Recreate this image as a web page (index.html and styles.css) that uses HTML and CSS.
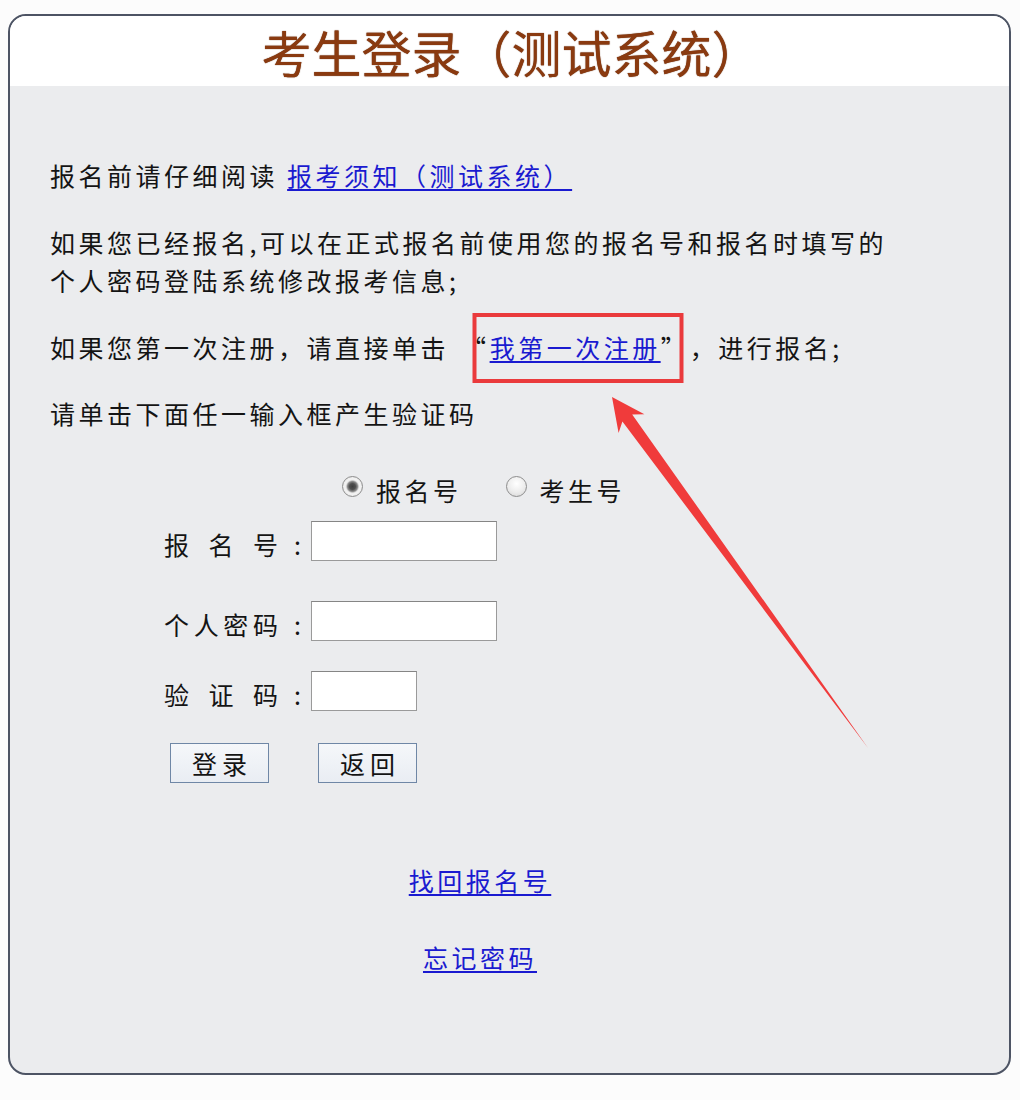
FILE: index.html
```html
<!DOCTYPE html>
<html lang="zh-CN">
<head>
<meta charset="utf-8">
<title>考生登录（测试系统）</title>
<link rel="stylesheet" href="styles.css">
</head>
<body>
<div class="panel">
  <div class="panel-head">
    <h1 class="title">考生登录（测试系统）</h1>
  </div>
  <div class="panel-body">
    <p class="para">报名前请仔细阅读 <a class="link" href="#">报考须知（测试系统）</a></p>
    <p class="para gap">如果您已经报名,可以在正式报名前使用您的报名号和报名时填写的<br>个人密码登陆系统修改报考信息;</p>
    <p class="para gap">如果您第一次注册，请直接单击 <span class="q-open">“</span><a class="link" href="#">我第一次注册</a>”<span class="q-comma">，</span>进行报名;</p>
    <p class="para gap2">请单击下面任一输入框产生验证码</p>

    <form class="form">
      <div class="radio-row">
        <label class="radio-item"><input class="radio" type="radio" name="t" checked><span>报名号</span></label>
        <label class="radio-item second"><input class="radio" type="radio" name="t"><span>考生号</span></label>
      </div>
      <div class="field row1">
        <span class="label"><span>报</span><span>名</span><span>号</span></span><span class="colon">:</span>
        <input class="input" type="text">
      </div>
      <div class="field row2">
        <span class="label"><span>个</span><span>人</span><span>密</span><span>码</span></span><span class="colon">:</span>
        <input class="input" type="password">
      </div>
      <div class="field row3">
        <span class="label"><span>验</span><span>证</span><span>码</span></span><span class="colon">:</span>
        <input class="input short" type="text">
      </div>
      <div class="buttons">
        <button class="btn" type="button">登录</button>
        <button class="btn" type="button">返回</button>
      </div>
    </form>

    <p class="center-link first"><a class="link" href="#">找回报名号</a></p>
    <p class="center-link second"><a class="link" href="#">忘记密码</a></p>
  </div>
</div>

<svg class="annot" viewBox="0 0 1020 1100" width="1020" height="1100" aria-hidden="true">
  <rect x="474.5" y="315" width="207" height="66" fill="none" stroke="#ea3a3c" stroke-width="4"/>
  <polygon points="612,397 644.4,414.3 632.2,414.5 868,748 622.4,421.6 618.6,433.1" fill="#f03b3b"/>
</svg>
</body>
</html>
```

FILE: styles.css
```css
html, body {
  margin: 0;
  padding: 0;
  background: #fcfcfc;
}

body {
  font-family: "Noto Sans CJK SC", "Noto Sans", sans-serif;
  color: #141414;
}

.panel {
  margin: 14px 0 0 8px;
  width: 1003px;
  height: 1061px;
  box-sizing: border-box;
  border: 2px solid #4d5464;
  border-radius: 18px;
  overflow: hidden;
  display: flex;
  flex-direction: column;
  background: #ebecee;
}

.panel-head {
  height: 70px;
  background: #ffffff;
  display: flex;
  align-items: center;
  justify-content: center;
}

.title {
  margin: 0;
  font-size: 50px;
  font-weight: 400;
  line-height: 70px;
  color: #8a3a10;
  text-shadow: 0 0 1px #5b2306;
  padding: 0 0 0 4px;
}

.panel-body {
  flex: 1;
  padding: 70px 99px 0 40px;
  font-size: 25px;
  letter-spacing: 3.5px;
}

.para {
  margin: 0;
  line-height: 38px;
  white-space: nowrap;
}

.gap { margin-top: 29px; }
.gap2 { margin-top: 28px; }

.q-open {
  margin-left: 3px;
}

.q-comma {
  margin-left: 13px;
}

.link {
  color: #1a1ad0;
  text-decoration: underline;
  text-underline-offset: 3px;
}

.form {
  margin: 41px 0 0 114px;
}

.radio-row {
  display: flex;
  align-items: center;
  height: 30px;
  margin-left: 178px;
}

.radio-item {
  display: flex;
  align-items: center;
  gap: 13px;
}

.radio-item.second {
  margin-left: 44px;
}

.radio-item span {
  position: relative;
  top: 2px;
}

.radio {
  appearance: none;
  -webkit-appearance: none;
  width: 21px;
  height: 21px;
  margin: 0;
  border-radius: 50%;
  border: 1px solid #8d8d8d;
  background: radial-gradient(circle at 50% 35%, #ffffff 0%, #ececec 55%, #d4d4d4 100%);
  box-sizing: border-box;
  position: relative;
  top: -2px;
}

.radio:checked {
  background: radial-gradient(circle at 50% 50%, #3e3e3e 0, #4f4f4f 3px, #8a8a8a 5px, #e9e9e9 6.5px, #f4f4f4 7.5px, #d6d6d6 100%);
}

.field {
  display: flex;
  align-items: center;
  height: 40px;
}

.row1 { margin-top: 18px; }
.row2 { margin-top: 40px; }
.row3 { margin-top: 30px; }

.label {
  width: 114px;
  display: flex;
  justify-content: space-between;
  letter-spacing: 0;
  position: relative;
  top: 3px;
}

.colon {
  width: 33px;
  box-sizing: border-box;
  text-align: right;
  padding-right: 10px;
  letter-spacing: 0;
  position: relative;
  top: 3px;
}

.input {
  width: 186px;
  height: 40px;
  margin: 0;
  box-sizing: border-box;
  border: 1px solid #9a9a9a;
  border-top-color: #858585;
  background: #ffffff;
  padding: 0 4px;
  font-size: 18px;
}

.input.short {
  width: 106px;
}

.buttons {
  display: flex;
  gap: 49px;
  margin: 32px 0 0 6px;
}

.btn {
  width: 99px;
  height: 40px;
  margin: 0;
  box-sizing: border-box;
  border: 1px solid #6f87a6;
  background: linear-gradient(#f5f7fa, #e9edf3);
  font-family: "Noto Sans CJK SC", sans-serif;
  font-size: 25px;
  letter-spacing: 5px;
  padding: 0 0 0 5px;
  color: #141414;
  line-height: 38px;
}

.center-link {
  margin: 0;
  text-align: center;
  line-height: 38px;
}

.center-link.first { margin-top: 78px; }
.center-link.second { margin-top: 39px; }

.annot {
  position: absolute;
  left: 0;
  top: 0;
  pointer-events: none;
}
```
